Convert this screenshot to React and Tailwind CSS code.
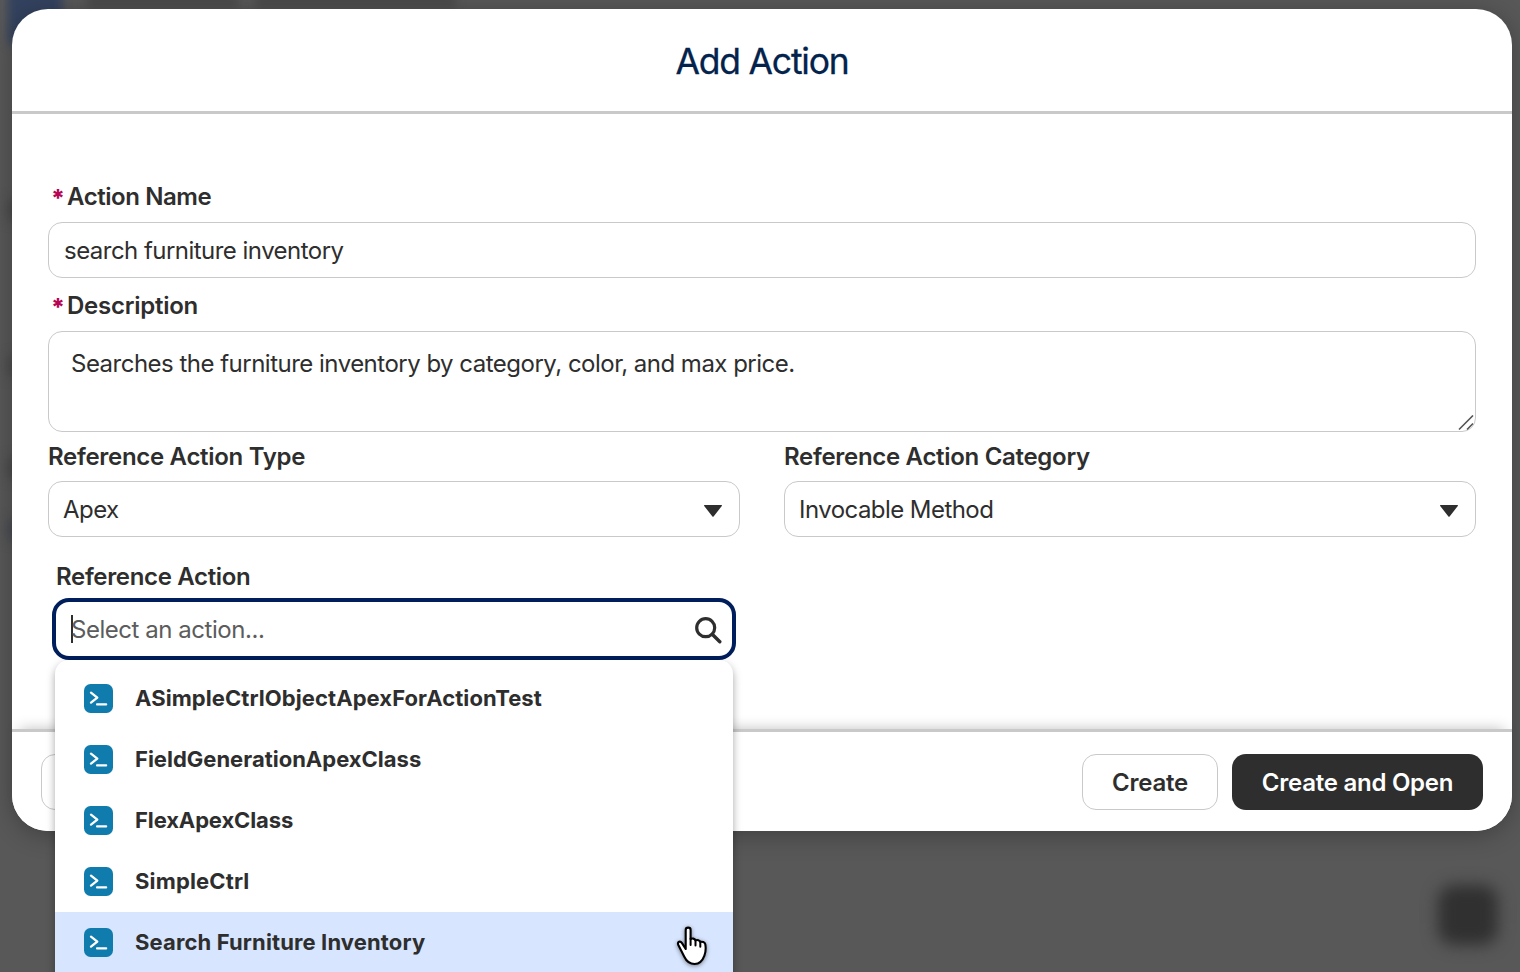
const options = [
  { label: 'ASimpleCtrlObjectApexForActionTest', tracking: 'tracking-[0.07px]' },
  { label: 'FieldGenerationApexClass', tracking: 'tracking-[0px]' },
  { label: 'FlexApexClass', tracking: 'tracking-[-0.12px]' },
  { label: 'SimpleCtrl', tracking: 'tracking-[0.15px]' },
  { label: 'Search Furniture Inventory', tracking: 'tracking-[0.13px]', active: true },
];

function ApexIcon() {
  return (
    <svg className="w-[29px] h-[29px] shrink-0" viewBox="0 0 29 29" fill="none">
      <rect width="29" height="29" rx="6.5" fill="#107cad" />
      <path d="M7 8.6l6.3 5L7 18.6" stroke="#fff" strokeWidth="2.3" strokeLinecap="round" strokeLinejoin="round" />
      <path d="M13 20.4h9.2" stroke="#fff" strokeWidth="2.1" strokeLinecap="round" />
    </svg>
  );
}

function Caret() {
  return (
    <svg className="w-5 h-3 mt-[3px] shrink-0" viewBox="0 0 20 12">
      <path d="M1.6 0h16.8c.6 0 .8.6.4 1L10.6 11.4c-.3.4-.9.4-1.2 0L1.2 1c-.4-.4-.2-1 .4-1z" fill="#2e2e2e" />
    </svg>
  );
}

function HandCursor() {
  return (
    <svg className="w-[36px] h-[44px] drop-shadow-[0_1px_2px_rgba(0,0,0,0.45)]" viewBox="0 0 36 44">
      <path
        d="M11.7 26V6.9c0-3 4.9-3 4.9 0v9.2c1.5-1.2 4.4-.5 4.9 1.3 1.6-.9 4.3-.2 4.800 1.600 1.800-.7 4.500.1 5 2.300.6 3.500.4 8-.9 11.400-1.800 5-5.300 8.300-9.800 8.300-4.700 0-8.300-3-10.300-7.200L4.200 21.700c-1-2.900 2-4.200 3.800-1.600z"
        fill="#fff"
        stroke="#000"
        strokeWidth="2.1"
        strokeLinejoin="round"
      />
      <path d="M16.6 15.5v6.500M21.500 17v5.500M26.300 18.700v5" stroke="#000" strokeWidth="2" strokeLinecap="round" />
    </svg>
  );
}

function RequiredMark() {
  return <span className="w-[15px] -ml-px mr-px pt-0.5 text-2xl/7 font-extrabold text-[#b60554]">*</span>;
}

function Select({ label, value }) {
  return (
    <div className="w-[692px]">
      <label className="block h-7 leading-7 font-semibold tracking-[-0.3px]">{label}</label>
      <div className="mt-[10px] h-14 flex items-center justify-between rounded-[14px] border border-[#c9c9c9] bg-white pl-[14px] pr-4">
        <span className="pt-0.5 tracking-[-0.55px]">{value}</span>
        <Caret />
      </div>
    </div>
  );
}

export default function App() {
  return (
    <div className="relative w-[1520px] h-[972px] overflow-hidden bg-[#585858] pt-[9px] pl-3 text-2xl text-[#2e2e2e] font-['Inter',sans-serif]">
      {/* blurred page behind the dialog */}
      <div className="absolute left-2 -top-4 w-[54px] h-[62px] rounded-lg bg-[#33425f] blur-[5px]"></div>
      <div className="absolute left-[88px] -top-2 w-[150px] h-4 bg-[#4a4a4a] blur-[5px]"></div>
      <div className="absolute left-[256px] -top-2 w-[200px] h-4 bg-[#4a4a4a] blur-[5px]"></div>
      <div className="absolute left-[7px] top-[200px] w-4 h-5 bg-[#484848] blur-[6px]"></div>
      <div className="absolute left-[7px] top-[356px] w-4 h-5 bg-[#4a4a4a] blur-[6px]"></div>
      <div className="absolute left-[7px] top-[458px] w-4 h-5 bg-[#484848] blur-[6px]"></div>
      <div className="absolute left-[7px] top-[520px] w-4 h-5 bg-[#454850] blur-[6px]"></div>
      <div className="absolute left-[1438px] top-[885px] w-[60px] h-[60px] rounded-2xl bg-[#303030] blur-[8px]"></div>

      <div className="relative w-[1500px] h-[822px] flex flex-col rounded-[36px] bg-white shadow-[0_4px_24px_rgba(0,0,0,0.28)]">
        <header className="h-[105px] shrink-0 border-b-[3px] border-[#c9c9c9] flex items-center justify-center">
          <h2 className="text-[35.5px] text-[#03234d] pt-1 tracking-[-1.2px] [-webkit-text-stroke:0.3px_#03234d]">Add Action</h2>
        </header>

        <main className="flex-1 px-9 pt-[69px]">
          <label className="flex h-7 pl-1 leading-7 font-semibold">
            <RequiredMark />
            <span className="tracking-[-0.43px]">Action Name</span>
          </label>
          <div className="mt-[11px] h-14 flex items-center rounded-[14px] border border-[#c9c9c9] pl-[15px]">
            <span className="pt-0.5 tracking-[-0.53px]">search furniture inventory</span>
          </div>

          <label className="mt-[14px] flex h-7 pl-1 leading-7 font-semibold">
            <RequiredMark />
            <span className="tracking-[-0.25px]">Description</span>
          </label>
          <div className="relative mt-[11px] h-[101px] rounded-[14px] border border-[#c9c9c9] pl-[22px] pt-[16px] leading-8">
            <span className="tracking-[-0.51px]">Searches the furniture inventory by category, color, and max price.</span>
            <svg className="absolute right-px bottom-0 w-4 h-4" viewBox="0 0 16 16" stroke="#555" strokeWidth="1.6">
              <path d="M1 14.5L15 0.5M9 14.5L15 8.5" />
            </svg>
          </div>

          <div className="mt-[11px] flex justify-between">
            <Select label="Reference Action Type" value="Apex" />
            <Select label="Reference Action Category" value="Invocable Method" />
          </div>

          <div className="relative ml-1 mt-[26px] w-[684px]">
            <label className="block h-7 pl-1 leading-7 font-semibold tracking-[-0.33px]">Reference Action</label>
            <div className="mt-[7px] h-[62px] flex items-center justify-between rounded-[17px] border-4 border-[#001e5b] bg-white pl-[15px] pr-[10px]">
              <div className="flex items-center">
                <span className="w-0.5 h-7 -mr-0.5 bg-[#2e2e2e]"></span>
                <span className="pt-0.5 text-[#5c5c5c] tracking-[-0.46px]">Select an action...</span>
              </div>
              <svg className="w-7 h-7 mt-0.5" viewBox="0 0 28 28" fill="none" stroke="#2e2e2e">
                <circle cx="11.7" cy="11.7" r="9" strokeWidth="3.2" />
                <path d="M18.5 18.5L25.8 25.8" strokeWidth="3.4" strokeLinecap="round" />
              </svg>
            </div>

            <ul className="absolute z-10 left-[3px] top-[97px] w-[678px] pt-2 pb-4 rounded-[14px] bg-white shadow-[0_4px_8px_rgba(0,0,0,0.35)] text-[22px] font-bold">
              {options.map((option) => (
                <li
                  key={option.label}
                  className={option.active ? 'h-[61px] flex items-center pl-[29px] pr-6 bg-[#d7e5fe]' : 'h-[61px] flex items-center pl-[29px] pr-6'}
                >
                  <ApexIcon />
                  <span className={`ml-[22px] ${option.tracking}`}>{option.label}</span>
                </li>
              ))}
            </ul>
          </div>
        </main>

        <footer className="h-[102px] shrink-0 flex items-center justify-between rounded-b-[36px] border-t-[3px] border-[#c9c9c9] bg-white px-[29px] shadow-[0_-8px_14px_-8px_rgba(0,0,0,0.25)]">
          <button className="h-14 w-[136px] rounded-[14px] border border-[#c9c9c9]"></button>
          <div className="flex gap-[14px] font-semibold tracking-[-0.25px]">
            <button className="h-14 w-[136px] pt-0.5 rounded-[14px] border border-[#c9c9c9]">Create</button>
            <button className="h-14 w-[251px] pt-0.5 rounded-[14px] bg-[#2e2e2e] text-white">Create and Open</button>
          </div>
        </footer>
      </div>

      <div className="absolute z-20 left-[674px] top-[923px]">
        <HandCursor />
      </div>
    </div>
  );
}
